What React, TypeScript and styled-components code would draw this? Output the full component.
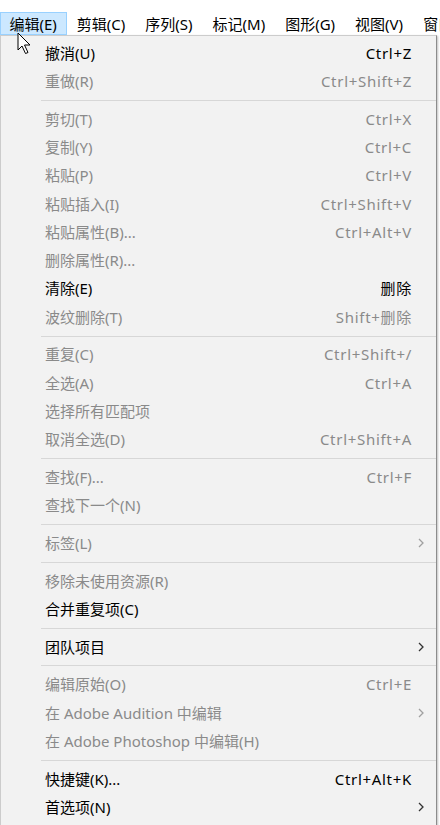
import {ReactElement} from "react";
import styled, {createGlobalStyle} from "styled-components";

const GlobalStyle = createGlobalStyle`
  html, body {
    margin: 0;
    padding: 0;
    background: #ffffff;
  }
  body {
    font-family: "Noto Sans", "Noto Sans CJK SC", sans-serif;
    font-size: 15px;
  }
`

// Styled Components
const Page = styled.div`
  position: relative;
  width: 440px;
  height: 825px;
  overflow: hidden;
  background: #ffffff;
  padding-top: 12px;
  box-sizing: border-box;
`

const MenuBar = styled.div`
  display: flex;
  height: 23px;
  align-items: stretch;
  overflow: hidden;
`

const BarItem = styled.div<{ $active?: boolean }>`
  display: flex;
  align-items: center;
  padding: 2px 9.5px 0 8.5px;
  box-sizing: border-box;
  white-space: nowrap;
  color: #000000;
  line-height: 1;
  background: ${({$active}) => ($active ? "#cce8ff" : "transparent")};
  border: 1px solid ${({$active}) => ($active ? "#99d1ff" : "transparent")};
`

const Dropdown = styled.div`
  width: 437px;
  box-sizing: border-box;
  background: #f2f2f2;
  border: 1px solid #cccccc;
  border-right-color: #8c8c8c;
  box-shadow: 1px 1px 2px rgba(0, 0, 0, 0.25);
  padding: 3px 0 4px;
`

const Row = styled.div<{ $enabled?: boolean }>`
  display: grid;
  grid-template-columns: 1fr auto 24px;
  align-items: center;
  height: 28.3px;
  padding-left: 44px;
  color: ${({$enabled}) => ($enabled ? "#000000" : "#8a8a8a")};
  white-space: nowrap;
  line-height: 1;
`

const Label = styled.span``

const Shortcut = styled.span`
  text-align: right;
  letter-spacing: 0.7px;
`

const ArrowCell = styled.span`
  display: flex;
  align-items: center;
  padding-left: 6px;
`

const Separator = styled.div`
  height: 9.4px;
  display: flex;
  align-items: center;
  padding-left: 40px;

  &::after {
    content: "";
    flex: 1;
    height: 1px;
    background: #d7d7d7;
  }
`

const Cursor = styled.svg`
  position: absolute;
  left: 17px;
  top: 32px;
`

type Item =
    | { sep: true }
    | { sep?: false; label: string; shortcut?: string; enabled?: boolean; sub?: boolean }

const items: Item[] = [
    {label: "撤消(U)", shortcut: "Ctrl+Z", enabled: true},
    {label: "重做(R)", shortcut: "Ctrl+Shift+Z"},
    {sep: true},
    {label: "剪切(T)", shortcut: "Ctrl+X"},
    {label: "复制(Y)", shortcut: "Ctrl+C"},
    {label: "粘贴(P)", shortcut: "Ctrl+V"},
    {label: "粘贴插入(I)", shortcut: "Ctrl+Shift+V"},
    {label: "粘贴属性(B)...", shortcut: "Ctrl+Alt+V"},
    {label: "删除属性(R)..."},
    {label: "清除(E)", shortcut: "删除", enabled: true},
    {label: "波纹删除(T)", shortcut: "Shift+删除"},
    {sep: true},
    {label: "重复(C)", shortcut: "Ctrl+Shift+/"},
    {label: "全选(A)", shortcut: "Ctrl+A"},
    {label: "选择所有匹配项"},
    {label: "取消全选(D)", shortcut: "Ctrl+Shift+A"},
    {sep: true},
    {label: "查找(F)...", shortcut: "Ctrl+F"},
    {label: "查找下一个(N)"},
    {sep: true},
    {label: "标签(L)", sub: true},
    {sep: true},
    {label: "移除未使用资源(R)"},
    {label: "合并重复项(C)", enabled: true},
    {sep: true},
    {label: "团队项目", enabled: true, sub: true},
    {sep: true},
    {label: "编辑原始(O)", shortcut: "Ctrl+E"},
    {label: "在 Adobe Audition 中编辑", sub: true},
    {label: "在 Adobe Photoshop 中编辑(H)"},
    {sep: true},
    {label: "快捷键(K)...", shortcut: "Ctrl+Alt+K", enabled: true},
    {label: "首选项(N)", enabled: true, sub: true},
]

const bar = ["编辑(E)", "剪辑(C)", "序列(S)", "标记(M)", "图形(G)", "视图(V)", "窗口(W)"]

const Chevron = ({color}: { color: string }): ReactElement => (
    <svg width="6" height="10" viewBox="0 0 6 10">
        <path d="M1 1 L5 5 L1 9" fill="none" stroke={color} strokeWidth="1.3"/>
    </svg>
)

const App = (): ReactElement => (
    <Page>
        <GlobalStyle/>
        <MenuBar>
            {bar.map((b, i) => (
                <BarItem key={b} $active={i === 0}>{b}</BarItem>
            ))}
        </MenuBar>
        <Dropdown>
            {items.map((it, i) =>
                it.sep ? (
                    <Separator key={i}/>
                ) : (
                    <Row key={i} $enabled={it.enabled}>
                        <Label>{it.label}</Label>
                        <Shortcut>{it.shortcut}</Shortcut>
                        <ArrowCell>
                            {it.sub && <Chevron color={it.enabled ? "#333333" : "#a0a0a0"}/>}
                        </ArrowCell>
                    </Row>
                )
            )}
        </Dropdown>
        <Cursor width="15" height="23" viewBox="0 0 15 23">
            <path d="M1 1 L1 18 L5 14 L8.5 21.5 L11 20.5 L7.5 13 L13 13 Z"
                  fill="#ffffff" stroke="#000000" strokeWidth="1" strokeLinejoin="miter"/>
        </Cursor>
    </Page>
)

export default App
